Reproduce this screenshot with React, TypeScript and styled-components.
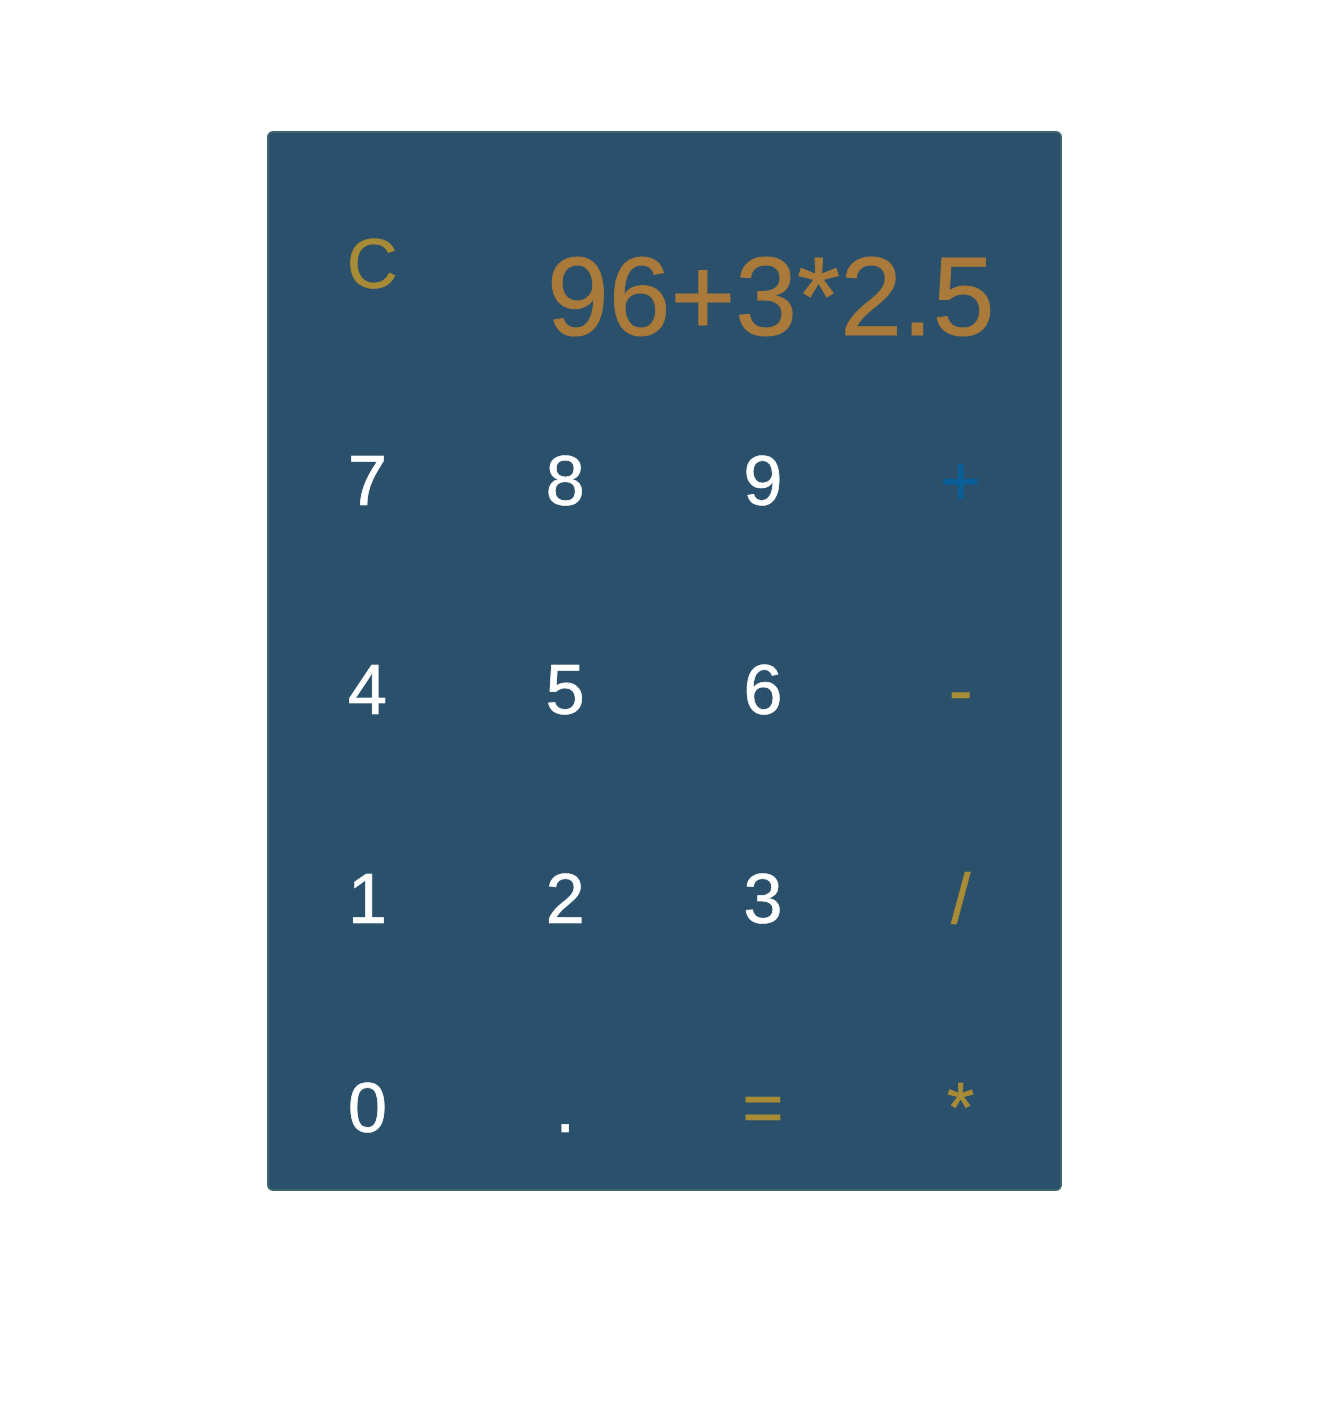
import React from 'react';
import styled, { createGlobalStyle } from 'styled-components';

const GlobalStyle = createGlobalStyle`
    body {
        margin: 0;
        background: #ffffff;
        font-family: 'Liberation Sans', Arial, Helvetica, sans-serif;
    }
`;

const Page = styled.div`
    display: flex;
    justify-content: center;
    padding-top: 131px;
    min-height: 1406px;
    box-sizing: border-box;
`;

const Panel = styled.div`
    width: 795px;
    height: 1060px;
    box-sizing: border-box;
    background: #2b506c;
    border: 2px solid #3e6470;
    border-radius: 6px;
    display: grid;
    grid-template-columns: repeat(4, 1fr);
    grid-template-rows: repeat(5, 1fr);
`;

type Tone = 'digit' | 'op' | 'plus';

const toneColor: Record<Tone, string> = {
    digit: '#ffffff',
    op: '#a88b36',
    plus: '#0b5f98',
};

const Key = styled.button<{ $tone: Tone }>`
    all: unset;
    display: flex;
    justify-content: center;
    align-items: flex-start;
    padding-top: 93px;
    box-sizing: border-box;
    font-family: 'Liberation Sans', Arial, Helvetica, sans-serif;
    font-size: 70px;
    line-height: 1;
    color: ${(p) => toneColor[p.$tone]};
    -webkit-text-stroke: 0.7px currentColor;
    cursor: pointer;
`;

const Clear = styled(Key)`
    padding-top: 96px;
    padding-left: 10px;
`;

const Display = styled.div`
    grid-column: 2 / span 3;
    display: flex;
    justify-content: flex-end;
    align-items: flex-start;
    padding-top: 109px;
    padding-right: 65px;
    font-size: 111px;
    line-height: 1;
    color: #a97a3a;
    -webkit-text-stroke: 1px currentColor;
    white-space: nowrap;
`;

const keys: { label: string; tone: Tone }[] = [
    { label: '7', tone: 'digit' },
    { label: '8', tone: 'digit' },
    { label: '9', tone: 'digit' },
    { label: '+', tone: 'plus' },
    { label: '4', tone: 'digit' },
    { label: '5', tone: 'digit' },
    { label: '6', tone: 'digit' },
    { label: '-', tone: 'op' },
    { label: '1', tone: 'digit' },
    { label: '2', tone: 'digit' },
    { label: '3', tone: 'digit' },
    { label: '/', tone: 'op' },
    { label: '0', tone: 'digit' },
    { label: '.', tone: 'digit' },
    { label: '=', tone: 'op' },
    { label: '*', tone: 'op' },
];

const App: React.FC = () => {
    return (
        <>
            <GlobalStyle />
            <Page>
                <Panel>
                    <Clear $tone="op">C</Clear>
                    <Display>96+3*2.5</Display>
                    {keys.map((k) => (
                        <Key key={k.label} $tone={k.tone}>
                            {k.label}
                        </Key>
                    ))}
                </Panel>
            </Page>
        </>
    );
};

export default App;
